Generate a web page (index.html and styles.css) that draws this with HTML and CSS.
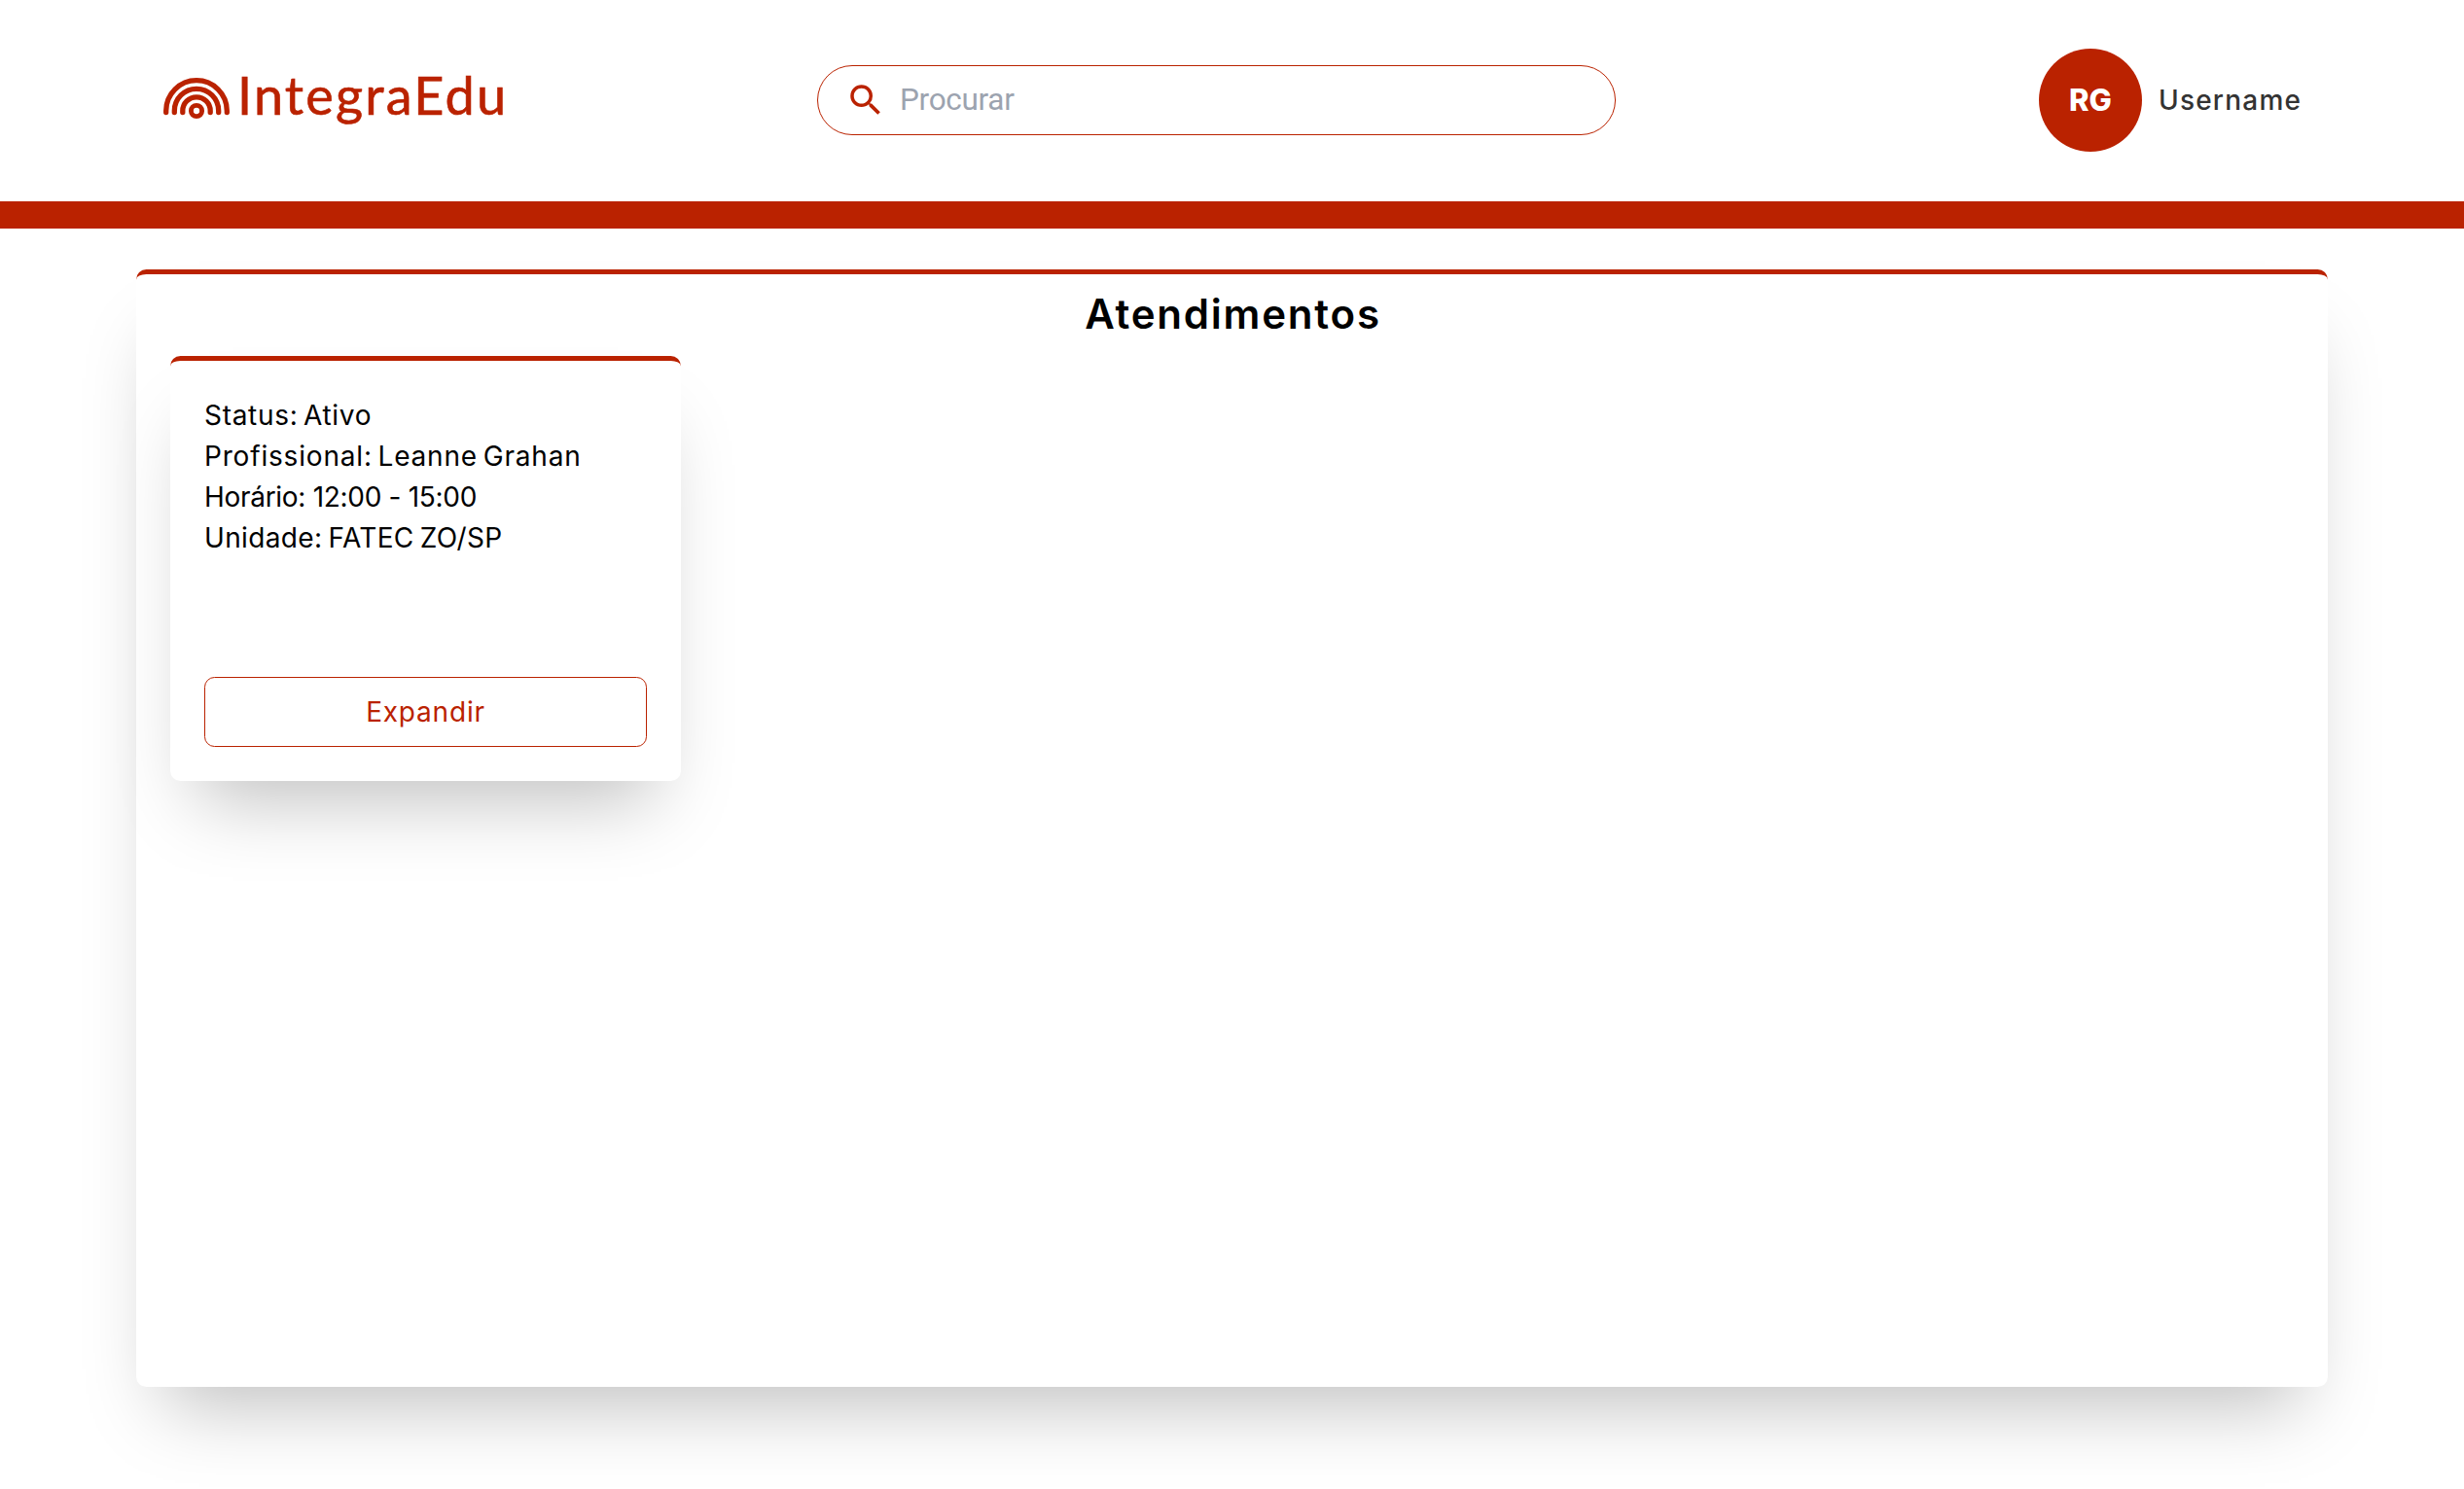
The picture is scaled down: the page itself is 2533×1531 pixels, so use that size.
FILE: index.html
```
<!DOCTYPE html>
<html lang="pt-BR">
<head>
<meta charset="utf-8">
<title>IntegraEdu</title>
<link rel="stylesheet" href="styles.css">
</head>
<body>
<header class="header">
  <a class="logo">
    <svg class="logo-mark" viewBox="0 0 68 43" fill="none" stroke="currentColor" stroke-width="5.3" stroke-linecap="round">
      <path d="M2.7 35.6V34a31.3 31.3 0 0 1 62.6 0v1.6"/>
      <path d="M11.3 35.6V34a22.7 22.7 0 0 1 45.4 0v1.6"/>
      <path d="M19.8 35.6V34a14.2 14.2 0 0 1 28.4 0v1.6"/>
      <circle cx="34" cy="34" r="5.6" stroke-width="4.9"/>
    </svg>
    <span class="logo-text">IntegraEdu</span>
  </a>
  <label class="search">
    <svg class="search-icon" viewBox="0 0 24 24" fill="currentColor"><path d="M15.5 14h-.79l-.28-.27A6.471 6.471 0 0 0 16 9.5 6.5 6.5 0 1 0 9.5 16c1.61 0 3.09-.59 4.23-1.57l.27.28v.79l5 4.99L20.49 19l-4.99-5zm-6 0C7.01 14 5 11.99 5 9.5S7.01 5 9.5 5 14 7.01 14 9.5 11.99 14 9.5 14z"/></svg>
    <input class="search-input" type="text" placeholder="Procurar">
  </label>
  <div class="user">
    <div class="avatar">RG</div>
    <span class="username">Username</span>
  </div>
</header>
<main class="panel">
  <h1 class="title">Atendimentos</h1>
  <article class="card">
    <div class="details">
      <p class="status">Status: Ativo</p>
      <p class="professional">Profissional: Leanne Grahan</p>
      <p class="schedule">Horário: 12:00 - 15:00</p>
      <p class="unit">Unidade: FATEC ZO/SP</p>
    </div>
    <button class="expand" type="button">Expandir</button>
  </article>
</main>
</body>
</html>
```
FILE: styles.css
```
* { box-sizing: border-box; margin: 0; padding: 0; }

body {
  height: 1531px;
  overflow: hidden;
  background: #fff;
  color: #000;
  font: 28px/42px Inter, "Open Sans", sans-serif;
}

.header {
  display: flex;
  align-items: center;
  height: 235px;
  padding: 0 0 1px 168px;
  border-bottom: 28px solid #ba2200;
}

.logo,
.search,
.user { flex-shrink: 0; }

.logo {
  display: flex;
  align-items: center;
  width: 672px;
  color: #ba2200;
}

.logo-mark { width: 68px; height: 43px; margin-bottom: 4px; }

.logo-text {
  margin: 0 0 10px 8px;
  font: 54px/64px Lato, sans-serif;
  letter-spacing: 2.2px;
  -webkit-text-stroke: 0.6px currentColor;
}

.search {
  display: flex;
  align-items: center;
  width: 821px;
  height: 72px;
  padding-left: 28px;
  border: 1px solid #ba2200;
  border-radius: 36px;
}

.search-icon { width: 42px; height: 42px; margin-bottom: 1px; color: #ba2200; }

.search-input {
  width: 640px;
  margin-left: 14px;
  border: 0;
  outline: 0;
  background: transparent;
  font: 31.5px/42px Roboto, sans-serif;
  letter-spacing: -0.3px;
}

.search-input::placeholder { color: #9ca3af; }

.user {
  display: flex;
  align-items: center;
  gap: 17px;
  margin-left: 435px;
}

.avatar {
  display: grid;
  place-items: center;
  width: 106px;
  height: 106px;
  border-radius: 50%;
  background: #ba2200;
  color: #fff;
  font-size: 31px;
  font-weight: 800;
}

.username {
  margin-bottom: 1px;
  color: #333;
  font-weight: 500;
  letter-spacing: 1.2px;
  white-space: nowrap;
}

.panel {
  width: 2253px;
  height: 1149px;
  margin: 42px 0 0 140px;
  padding: 9px 35px;
  border-top: 5px solid #ba2200;
  border-radius: 10.5px;
  box-shadow: 0 47px 74px -28px rgb(0 0 0 / 25%);
}

.title {
  padding-left: 2px;
  font-size: 42px;
  font-weight: 600;
  line-height: 63px;
  letter-spacing: 1.8px;
  text-align: center;
}

.card {
  display: flex;
  flex-direction: column;
  justify-content: space-between;
  width: 525px;
  height: 437px;
  margin-top: 12px;
  padding: 35px;
  border-top: 5px solid #ba2200;
  border-radius: 10.5px;
  box-shadow: 0 47px 74px -28px rgb(0 0 0 / 25%);
}

.details { font-size: 28px; white-space: nowrap; }
.status { letter-spacing: 0.7px; word-spacing: -3px; }
.professional { letter-spacing: 0.82px; word-spacing: -3px; }
.schedule { letter-spacing: -0.3px; }
.unit { letter-spacing: 0.35px; word-spacing: -2px; }

.expand {
  width: 455px;
  height: 72px;
  border: 1px solid #ba2200;
  border-radius: 10.5px;
  background: transparent;
  color: #ba2200;
  font: 28px/42px Inter, sans-serif;
  letter-spacing: 0.8px;
}
```
